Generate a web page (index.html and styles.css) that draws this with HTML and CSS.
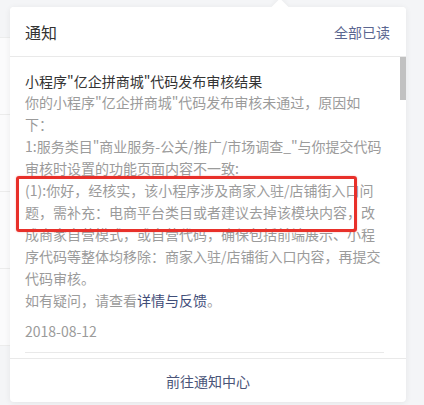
FILE: index.html
```html
<!DOCTYPE html>
<html lang="zh-CN">
<head>
  <meta charset="UTF-8" />
  <meta name="viewport" content="width=device-width, initial-scale=1.0"/>
  <title>通知</title>
  <link rel="stylesheet" href="styles.css">
</head>
<body>
  <div class="side">
    <div class="side-row"></div>
    <div class="side-row"></div>
    <div class="side-row"></div>
    <div class="side-row"></div>
  </div>

  <div class="popover">
    <div class="pop-head">
      <span class="pop-title">通知</span>
      <a class="pop-action" href="#">全部已读</a>
    </div>

    <div class="pop-list">
      <div class="notice">
        <div class="notice-title">小程序"亿企拼商城"代码发布审核结果</div>
        <div class="notice-body">
          你的小程序"亿企拼商城"代码发布审核未通过，原因如下：<br>
          1:服务类目"商业服务-公关/推广/市场调查_"与你提交代码审核时设置的功能页面内容不一致:<br>
          (1):你好，经核实，该小程序涉及商家入驻/店铺街入口问题，需补充：电商平台类目或者建议去掉该模块内容，改成商家自营模式，或自营代码，确保包括前端展示、小程序代码等整体均移除：商家入驻/店铺街入口内容，再提交代码审核。<br>
          如有疑问，请查看<a href="#">详情与反馈</a>。
          <span class="mark"></span>
        </div>
        <div class="notice-date">2018-08-12</div>
      </div>
    </div>

    <div class="scroll-thumb"></div>

    <div class="pop-foot">
      <a href="#">前往通知中心</a>
    </div>
  </div>
</body>
</html>
```

FILE: styles.css
```css
:root {
  --text-main: #333333;
  --text-gray: #9b9b9b;
  --link-color: #4a5580;
  --line-color: #e9e9e9;
  --page-bg: #f4f5f7;
}
* { box-sizing:border-box; margin:0; padding:0; }
body {
  background:var(--page-bg);
  font-family:"Noto Sans CJK SC","Noto Sans",sans-serif;
  text-spacing-trim:space-all;
  display:flex; align-items:flex-start;
  height:405px; overflow:hidden;
}
a { text-decoration:none; color:var(--link-color); }

/* page behind the popover */
.side {
  width:10px; flex:none;
  margin-top:37px;
  background:#fbfbfc;
  border-top:1px solid #eceded;
}
.side-row {
  height:77px;
  border-bottom:1px solid #ececec;
}

/* popover */
.popover {
  position:relative;
  width:396px; height:395px;
  margin-top:7px;
  background:#fff;
  border-radius:4px;
  box-shadow:0 1px 6px rgba(0,0,0,0.07);
  display:flex; flex-direction:column;
}
.popover:before {
  content:"";
  position:absolute;
  top:-6px; left:264px;
  width:12px; height:12px;
  background:#fff;
  transform:rotate(45deg);
  box-shadow:-2px -2px 4px rgba(0,0,0,0.03);
}
.pop-head {
  position:relative;
  height:50px; flex:none;
  padding:0 16px 0 15px;
  display:flex; align-items:center; justify-content:space-between;
  border-bottom:1px solid var(--line-color);
  background:#fff;
  border-radius:4px 4px 0 0;
}
.pop-title { font-size:16px; color:var(--text-main); }
.pop-action { font-size:14px; color:#5b6690; }

.pop-list {
  flex:1; min-height:0;
  overflow:hidden;
}
.scroll-thumb {
  position:absolute;
  top:50px; right:0;
  width:6px; height:43px;
  background:#c1c1c1;
}

.notice {
  margin:0 22px 0 15px;
  padding:13px 0 10px;
  border-bottom:1px solid var(--line-color);
  font-size:14px; line-height:22px;
}
.notice-title { color:var(--text-main); margin-bottom:-1px; }
.notice-body {
  position:relative;
  color:var(--text-gray);
}
.notice-body a { color:#3f4d78; }
.notice-date {
  margin-top:9px;
  color:var(--text-gray);
}

/* red annotation box */
.mark {
  position:absolute;
  left:-9px; top:85px;
  width:341px; height:56px;
  border:3px solid #e8302a;
  border-radius:3px;
  box-shadow:0 0 2px rgba(232,48,42,0.35);
}

.pop-foot {
  height:44px; flex:none;
  border-top:1px solid var(--line-color);
  display:flex; align-items:center; justify-content:center;
  font-size:14px;
}
.pop-foot a { color:#4a5478; }
```
